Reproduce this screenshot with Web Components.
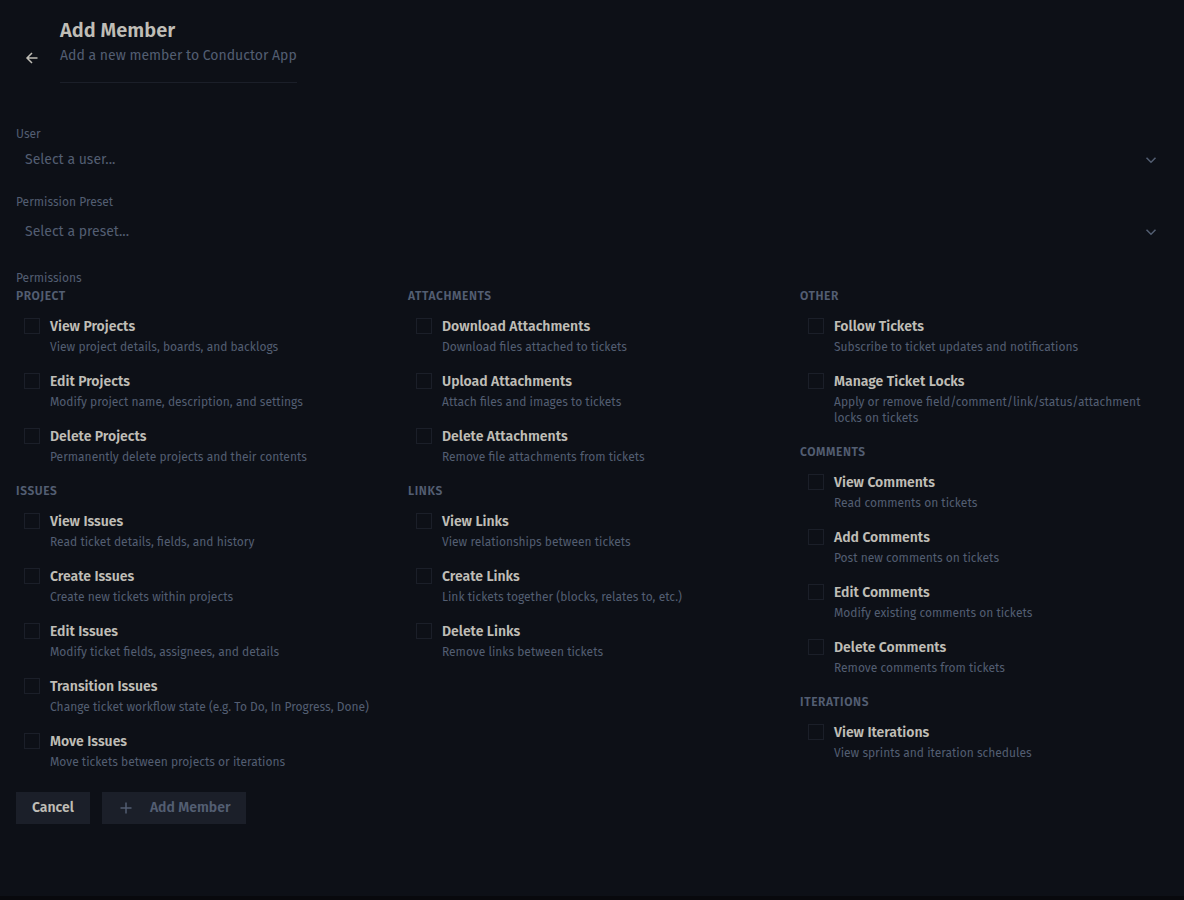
<!DOCTYPE html>
<html lang="en">
<head>
<meta charset="UTF-8">
<meta name="viewport" content="width=device-width, initial-scale=1">
<title>Add Member</title>
<style>
  :root {
    --bg: #0d1017;
    --edge: #08090d;
    --text: #bfbdb6;
    --muted: #535e72;
    --line: #1b1f29;
    --button: #1b1f29;
  }
  body {
    margin: 0;
    background: var(--edge);
    color: var(--text);
    font: 14px/20px "Fira Sans", "Noto Sans", sans-serif;
  }
</style>
</head>
<body>
<add-member-page></add-member-page>

<script>
class AppIcon extends HTMLElement {
  constructor() {
    super();
    this.attachShadow({ mode: 'open' });
  }

  connectedCallback() {
    const paths = {
      back: '<path d="M13.5 8H3M8 3 3 8l5 5"/>',
      chevron: '<path d="m3.5 5.8 4.5 4.5 4.5-4.5"/>',
      plus: '<path d="M8 2.5v11M2.5 8h11"/>'
    };
    this.shadowRoot.innerHTML = `
      <style>
        :host { display: block; flex: none; width: 16px; height: 16px; }
        svg { display: block; fill: none; stroke: currentColor; stroke-width: 1.5; }
      </style>
      <svg width="16" height="16" viewBox="0 0 16 16" aria-hidden="true">${paths[this.getAttribute('name')]}</svg>
    `;
  }
}
customElements.define('app-icon', AppIcon);

class PageHeader extends HTMLElement {
  constructor() {
    super();
    this.attachShadow({ mode: 'open' });
    this.shadowRoot.innerHTML = `
      <style>
        :host { display: flex; align-items: center; gap: 12px; }
        button {
          display: flex;
          padding: 8px;
          border: 0;
          background: none;
          color: inherit;
        }
        .titles { margin-bottom: 16px; padding-bottom: 16px; border-bottom: 1px solid var(--line); }
        h1 { margin: 0; font-size: 20px; line-height: 28px; font-weight: 600; }
        p { margin: 2px 0 0; color: var(--muted); }
      </style>
      <button type="button" aria-label="Back"><app-icon name="back"></app-icon></button>
      <div class="titles">
        <h1><slot name="title"></slot></h1>
        <p><slot></slot></p>
      </div>
    `;
  }
}
customElements.define('page-header', PageHeader);

class SelectField extends HTMLElement {
  constructor() {
    super();
    this.attachShadow({ mode: 'open' });
  }

  connectedCallback() {
    this.shadowRoot.innerHTML = `
      <style>
        :host { display: flex; flex-direction: column; gap: var(--label-gap, 0); color: var(--muted); }
        label { font-size: 12px; line-height: 18px; }
        .control { display: grid; grid-template-columns: 1fr 16px 9px; align-items: center; }
        select {
          grid-area: 1 / 1 / 2 / 4;
          height: 34px;
          padding: 0 9px;
          border: 0;
          appearance: none;
          background: transparent;
          color: inherit;
          font: inherit;
        }
        app-icon { grid-area: 1 / 2; pointer-events: none; }
      </style>
      <label for="field">${this.getAttribute('label')}</label>
      <div class="control">
        <select id="field"><option>${this.getAttribute('placeholder')}</option></select>
        <app-icon name="chevron"></app-icon>
      </div>
    `;
  }
}
customElements.define('select-field', SelectField);

class PermissionItem extends HTMLElement {
  constructor() {
    super();
    this.attachShadow({ mode: 'open' });
  }

  connectedCallback() {
    this.shadowRoot.innerHTML = `
      <style>
        :host { display: block; }
        label { display: flex; gap: 10px; padding: 8px 8px 9px; }
        input {
          flex: none;
          box-sizing: border-box;
          width: 16px;
          height: 16px;
          margin: 1px 0 0;
          appearance: none;
          border: 1px solid var(--line);
        }
        input:checked { background: var(--muted); }
        .text { display: flex; flex-direction: column; gap: 2px; }
        .name { font-weight: 600; }
        .hint { font-size: 12px; line-height: 16px; color: var(--muted); }
      </style>
      <label>
        <input type="checkbox">
        <span class="text">
          <span class="name">${this.getAttribute('name')}</span>
          <span class="hint"><slot></slot></span>
        </span>
      </label>
    `;
  }
}
customElements.define('permission-item', PermissionItem);

class PermissionGroup extends HTMLElement {
  constructor() {
    super();
    this.attachShadow({ mode: 'open' });
  }

  connectedCallback() {
    this.shadowRoot.innerHTML = `
      <style>
        :host { display: block; }
        h2 {
          margin: 0 0 4px;
          font-size: 12px;
          line-height: 18px;
          font-weight: 600;
          letter-spacing: 0.05em;
          color: var(--muted);
        }
      </style>
      <h2>${this.getAttribute('heading')}</h2>
      <slot></slot>
    `;
  }
}
customElements.define('permission-group', PermissionGroup);

class AppButton extends HTMLElement {
  constructor() {
    super();
    this.attachShadow({ mode: 'open' });
  }

  connectedCallback() {
    const disabled = this.hasAttribute('disabled') ? 'disabled' : '';
    this.shadowRoot.innerHTML = `
      <style>
        :host { display: block; }
        button {
          display: flex;
          align-items: center;
          gap: 16px;
          height: 32px;
          padding: 0 16px;
          border: 0;
          background: var(--button);
          color: var(--text);
          font: inherit;
          font-weight: 600;
        }
        button:disabled { color: var(--muted); }
      </style>
      <button type="button" ${disabled}><slot name="icon"></slot><span><slot></slot></span></button>
    `;
  }
}
customElements.define('app-button', AppButton);

// Permission groups, one inner array per column
const columns = [
  [
    ['PROJECT', [
      ['View Projects', 'View project details, boards, and backlogs'],
      ['Edit Projects', 'Modify project name, description, and settings'],
      ['Delete Projects', 'Permanently delete projects and their contents']
    ]],
    ['ISSUES', [
      ['View Issues', 'Read ticket details, fields, and history'],
      ['Create Issues', 'Create new tickets within projects'],
      ['Edit Issues', 'Modify ticket fields, assignees, and details'],
      ['Transition Issues', 'Change ticket workflow state (e.g. To Do, In Progress, Done)'],
      ['Move Issues', 'Move tickets between projects or iterations']
    ]]
  ],
  [
    ['ATTACHMENTS', [
      ['Download Attachments', 'Download files attached to tickets'],
      ['Upload Attachments', 'Attach files and images to tickets'],
      ['Delete Attachments', 'Remove file attachments from tickets']
    ]],
    ['LINKS', [
      ['View Links', 'View relationships between tickets'],
      ['Create Links', 'Link tickets together (blocks, relates to, etc.)'],
      ['Delete Links', 'Remove links between tickets']
    ]]
  ],
  [
    ['OTHER', [
      ['Follow Tickets', 'Subscribe to ticket updates and notifications'],
      ['Manage Ticket Locks', 'Apply or remove field/comment/link/status/attachment locks on tickets']
    ]],
    ['COMMENTS', [
      ['View Comments', 'Read comments on tickets'],
      ['Add Comments', 'Post new comments on tickets'],
      ['Edit Comments', 'Modify existing comments on tickets'],
      ['Delete Comments', 'Remove comments from tickets']
    ]],
    ['ITERATIONS', [
      ['View Iterations', 'View sprints and iteration schedules']
    ]]
  ]
];

function renderGroup([heading, items]) {
  const rows = items.map(([name, hint]) => `<permission-item name="${name}">${hint}</permission-item>`);
  return `<permission-group heading="${heading}">${rows.join('')}</permission-group>`;
}

class AddMemberPage extends HTMLElement {
  constructor() {
    super();
    this.attachShadow({ mode: 'open' });
  }

  connectedCallback() {
    this.shadowRoot.innerHTML = `
      <style>
        :host {
          display: block;
          box-sizing: border-box;
          min-height: calc(100vh - 4px);
          padding: 16px;
          background: var(--bg);
        }
        form { margin-top: 26px; }
        .user { margin-bottom: 16px; }
        .preset { margin-bottom: 20px; --label-gap: 4px; }
        fieldset { margin: 0; padding: 0; border: 0; min-width: 0; }
        legend { padding: 0; font-size: 12px; line-height: 18px; color: var(--muted); }
        .columns { display: grid; grid-template-columns: repeat(3, 1fr); gap: 24px; }
        .column { display: flex; flex-direction: column; gap: 8px; }
        .actions { display: flex; gap: 12px; margin-top: 13px; }
      </style>
      <page-header><span slot="title">Add Member</span>Add a new member to Conductor App</page-header>
      <form>
        <select-field class="user" label="User" placeholder="Select a user..."></select-field>
        <select-field class="preset" label="Permission Preset" placeholder="Select a preset..."></select-field>
        <fieldset>
          <legend>Permissions</legend>
          <div class="columns">
            ${columns.map(groups => `<div class="column">${groups.map(renderGroup).join('')}</div>`).join('')}
          </div>
        </fieldset>
        <div class="actions">
          <app-button>Cancel</app-button>
          <app-button disabled><app-icon slot="icon" name="plus"></app-icon>Add Member</app-button>
        </div>
      </form>
    `;
  }
}
customElements.define('add-member-page', AddMemberPage);
</script>
</body>
</html>
